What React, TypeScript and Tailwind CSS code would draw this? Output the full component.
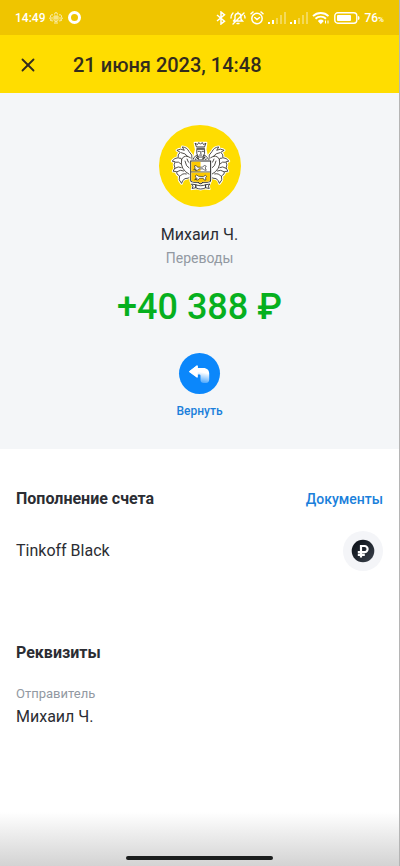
import { X } from "lucide-react";

const SENDER = "Михаил Ч.";

const DETAILS = [{ label: "Отправитель", value: SENDER }];

function SignalIcon() {
  return (
    <svg viewBox="0 0 18 12" className="w-[18px] h-3" fill="#fff" aria-hidden="true">
      <rect x="0" y="10" width="2" height="2" />
      <rect x="4" y="8" width="2" height="4" />
      <rect x="8" y="6" width="2" height="6" opacity="0.35" />
      <rect x="12" y="3" width="2" height="9" opacity="0.35" />
      <rect x="16" y="0" width="2" height="12" opacity="0.35" />
    </svg>
  );
}

function StatusBar() {
  return (
    <div className="h-[35px] px-[15px] flex items-center justify-between bg-[#efc500] text-white text-xs font-medium">
      <div className="flex items-center gap-1">
        <span>14:49</span>
        {/* Small crest from the bank notification */}
        <svg viewBox="0 0 14 12" className="w-[14px] h-3" fill="none" stroke="#fff" strokeWidth="0.9" opacity="0.75" aria-hidden="true">
          <path d="M5 4h4v4.500L7 10 5 8.500zM5.500 2.500 6 .8h2l.5 1.700M5 6h4M7 4v5.500M4 3C2.500 2 1 3.500 1.500 5L.5 6.500 2 7l-.5 1.500L4 9M10 3c1.500-1 3 .5 2.500 2l1 1.500L12 7l.5 1.500L10 9M3 5v2.500M11 5v2.500M5 11h4" />
        </svg>
        <span className="size-[13px] ml-px rounded-full border-[3px] border-white" />
      </div>

      <div className="flex items-center gap-1">
        <svg viewBox="0 0 10 14" className="w-[10px] h-[14px]" fill="none" stroke="#fff" strokeWidth="1.500" aria-hidden="true">
          <path d="m1 4 7.500 6.200L5 13V1l3.500 2.800L1 10" />
        </svg>
        <svg viewBox="0 0 16 14" className="w-4 h-[14px]" fill="none" stroke="#fff" strokeWidth="1.400" strokeLinecap="round" aria-hidden="true">
          <path d="M4 10h8.500L11 8.300V5.500a3 3 0 0 0-6 0v2.800L3.500 10M7 12.500h2M3 13 14 2M1 7c0-2 .5-3.500 2-5M15 7c0-1-.2-1.800-.6-2.500M8 1.200v1" />
        </svg>
        <svg viewBox="0 0 14 14" className="size-[14px]" fill="none" stroke="#fff" strokeWidth="1.500" strokeLinecap="round" aria-hidden="true">
          <circle cx="7" cy="7.500" r="5.200" />
          <path d="m4.800 6.500 2.200 2 2.500-2M1 2.800 3 1M13 2.800 11 1" />
        </svg>
        <SignalIcon />
        <SignalIcon />
        <svg viewBox="0 0 18 14" className="w-[18px] h-[14px]" fill="none" stroke="#fff" strokeWidth="1.900" aria-hidden="true">
          <path d="M1 5.200a11 11 0 0 1 15.500 0M3.500 7.800a7.500 7.500 0 0 1 10.500 0" />
          <path d="M5.800 9.900a4.500 4.500 0 0 1 6 0l-3 3.300z" fill="#fff" stroke="none" />
          <path d="M13.500 12.500v-3M16 9.500v3" strokeWidth="1" />
        </svg>
        <svg viewBox="0 0 26 12" className="w-[26px] h-3" aria-hidden="true">
          <rect x="0.800" y="0.800" width="22" height="10.400" rx="3" fill="none" stroke="#fff" strokeWidth="1.400" />
          <rect x="3" y="3" width="14" height="6" rx="1" fill="#fff" />
          <path d="M24 4v4c1 0 1.500-.8 1.500-2S25 4 24 4z" fill="#fff" />
        </svg>
        <span>
          76<span className="text-[8px]">%</span>
        </span>
      </div>
    </div>
  );
}

const WING_OUTLINE =
  "M64 50 56 40Q50 27 36 26L42 36Q31 29 20 36L30 42Q21 49 24 58 13 58 6 68L15 70Q9 79 14 88L9 98 19 99Q18 108 28 112 23 124 34 134 35 125 44 120 54 121 62 112L66 80Z";

function LeafWing() {
  return (
    <g transform="translate(60 69)" strokeLinejoin="round">
      <path d={WING_OUTLINE} fill="#fff" stroke="#fff" strokeWidth="8" />
      <path d={WING_OUTLINE} fill="#fff" stroke="#33302a" strokeWidth="2.500" />
      <path
        d="M60 58Q43 46 34 63 28 92 58 108M33 43Q45 44 52 54M26 59Q34 57 35 64M17 71Q25 68 32 76M15 89Q24 82 33 87M21 99Q30 92 40 97M30 112Q36 103 48 106M44 68Q46 84 58 90M50 62Q52 72 60 76"
        fill="none"
        stroke="#33302a"
        strokeWidth="2.500"
        strokeLinecap="round"
      />
    </g>
  );
}

function Crest() {
  return (
    <svg viewBox="27 30 243 243" className="size-[82px]" role="img" aria-label="Тинькофф">
      <circle cx="148.500" cy="151.500" r="121.500" fill="#ffdd00" />
      <LeafWing />
      <g transform="matrix(-1 0 0 1 300 0)">
        <LeafWing />
      </g>

      {/* Crown and helmet */}
      <path d="M133 83h34l-3 20 8 32h-43l8-32z" fill="#fff" stroke="#fff" strokeWidth="7" strokeLinejoin="round" />
      <path d="m134 84 4 11h24l4-11-7 4-4-6-5 5-5-5-4 6z" fill="#fff" stroke="#292929" strokeWidth="2.500" strokeLinejoin="round" />
      <path d="M138 99h25M139 102v12l5 11h13l5-11v-12z" fill="#fff" stroke="#292929" strokeWidth="2.500" />
      <path d="M142 108h6M154 108h6M151 107v9M146 119h9" fill="none" stroke="#292929" strokeWidth="2.500" />
      <path d="m139 119-9 8-3 9h48l-4-9-9-8-7 14h-9z" fill="#fff" stroke="#292929" strokeWidth="2.500" />
      <path d="m133 130 6 5M137 124l8 10M168 130l-6 5M164 124l-8 10" stroke="#292929" strokeWidth="3" />

      {/* Shield */}
      <path d="M120 136h61v59c0 5-5 6-11 6h-13l-7 5-7-5h-12c-6 0-11-1-11-6z" fill="#fff" stroke="#fff" strokeWidth="6" />
      <path d="M121 137h59v57c0 5-4 6-10 6h-13l-7 5-7-5h-12c-6 0-10-1-10-6z" fill="#fff" stroke="#292929" strokeWidth="3" />
      <path d="M123 139h27v29h-27zM123 171h55v23c0 4-3 4-8 4h-13l-7 4-7-4h-12c-5 0-8 0-8-4z" fill="#fdc900" />
      <path d="M122 169h57" stroke="#292929" strokeWidth="2" />
      <path d="M130 163l4-6-2-6 5-1 4 5h14l7-5 5 2-3 5 3 7h-5l-4-4h-13l-5 5h-5l2-5z" fill="#fff" stroke="#292929" strokeWidth="2" strokeLinejoin="round" />
      <path d="M133 193l4-7-3-5 5-3 5 4 15 1 5-4 4 3-3 4 1 7h-5l-3-5h-11l-4 5h-5l2-5z" fill="#fff" stroke="#292929" strokeWidth="2" strokeLinejoin="round" />

      {/* Ribbon */}
      <path d="m123 203 14 3c9 4 18 4 27 0l14-3-4 8 3 9-15-2c-8 4-15 4-23 0l-15 2 3-9z" fill="#fff" stroke="#fff" strokeWidth="6" strokeLinejoin="round" />
      <path d="m123 205 13 2v9l-11 2 3-7zM178 205l-13 2v9l11 2-3-7zM136 207c9 4 20 4 29 0v9c-9 5-20 5-29 0z" fill="#fff" stroke="#292929" strokeWidth="2.500" strokeLinejoin="round" />
    </svg>
  );
}

function ReturnIcon() {
  return (
    <svg viewBox="0 0 41 41" className="size-[41px]" aria-hidden="true">
      <defs>
        <linearGradient id="return-tail" gradientUnits="userSpaceOnUse" x1="27" y1="20" x2="25" y2="31">
          <stop offset="0" stopColor="#fff" />
          <stop offset="1" stopColor="#fff" stopOpacity="0.2" />
        </linearGradient>
      </defs>
      <path
        d="M10.300 18.200 17.800 12.500c.4-.3.900 0 .9.500v1.900h5.800c3.500 0 5.700 2.200 5.700 5.700v6.200c0 2-1.200 3.200-3.200 3.200h-2.500c-1.800 0-3-1.200-3-3v-4.200c0-.8-.5-1.300-1.300-1.300h-1.500V24c0 .5-.5.800-.9.500l-7.500-5.600c-.3-.2-.3-.5 0-.7z"
        fill="url(#return-tail)"
      />
      <path d="M10.300 18.200 17.800 12.500c.4-.3.900 0 .9.500v11c0 .5-.5.800-.9.500l-7.500-5.600c-.3-.2-.3-.5 0-.7z" fill="#fff" />
    </svg>
  );
}

function RubleBadge() {
  return (
    <div className="size-10 rounded-full bg-[#f4f5f8] flex items-center justify-center">
      <svg viewBox="0 0 24 24" className="size-6" role="img" aria-label="Рублевый счет">
        <defs>
          <linearGradient id="ruble-badge" x1="0" y1="0" x2="1" y2="1">
            <stop offset="0" stopColor="#080d14" />
            <stop offset="1" stopColor="#3b424c" />
          </linearGradient>
        </defs>
        <circle cx="12" cy="12" r="11.300" fill="url(#ruble-badge)" />
        <path d="M10 18.500V7h3.500a3 3 0 0 1 0 6.200H6.800M6.800 15.800h7" fill="none" stroke="#fff" strokeWidth="2.200" />
      </svg>
    </div>
  );
}

export default function App() {
  return (
    <div className="min-h-screen flex flex-col bg-white border-r border-[#b5b5b5] font-['Roboto',sans-serif] text-[#2b2d33]">
      <StatusBar />

      <header className="h-[58px] pt-0.5 px-4 flex items-center gap-[33px] bg-[#ffdd00] text-[#332c1d]">
        <button type="button" aria-label="Закрыть" className="size-6 flex items-center justify-center">
          <X className="size-[22px]" strokeWidth={2} />
        </button>
        <h1 className="text-xl font-medium">21 июня 2023, 14:48</h1>
      </header>

      <main>
        {/* Operation summary */}
        <section className="pt-8 pb-[30px] flex flex-col items-center bg-[#f4f6f8]">
          <Crest />
          <p className="mt-4 text-base leading-6">{SENDER}</p>
          <p className="text-sm leading-[22px] text-[#9299a2]">Переводы</p>
          <p className="mt-4 text-4xl leading-[44px] font-medium text-[#06b01e]">+40 388 ₽</p>
          <button type="button" className="mt-6 flex flex-col items-center gap-[9px] text-xs font-medium text-[#1a7fdb]">
            <span className="rounded-full bg-[#0b87fb]">
              <ReturnIcon />
            </span>
            Вернуть
          </button>
        </section>

        {/* Account */}
        <section className="px-4 pt-[38px]">
          <div className="flex items-center justify-between leading-6">
            <h2 className="text-base font-bold">Пополнение счета</h2>
            <a href="#documents" className="text-sm font-medium text-[#1a7fdb]">
              Документы
            </a>
          </div>
          <div className="mt-5 flex items-center justify-between">
            <span className="text-base">Tinkoff Black</span>
            <RubleBadge />
          </div>
        </section>

        {/* Details */}
        <section className="px-4 pt-[70px]">
          <h2 className="text-base leading-6 font-bold">Реквизиты</h2>
          <dl className="mt-[18px]">
            {DETAILS.map((item) => (
              <div key={item.label}>
                <dt className="text-[13px] leading-[22px] text-[#9299a2]">{item.label}</dt>
                <dd className="text-base leading-6">{item.value}</dd>
              </div>
            ))}
          </dl>
        </section>
      </main>

      <footer className="mt-auto h-[54px] pb-1.5 flex items-end justify-center bg-linear-to-b from-white to-[#d3d3d3]">
        <div className="w-[37%] h-1 rounded-full bg-[#1b1d1d]" />
      </footer>
    </div>
  );
}
